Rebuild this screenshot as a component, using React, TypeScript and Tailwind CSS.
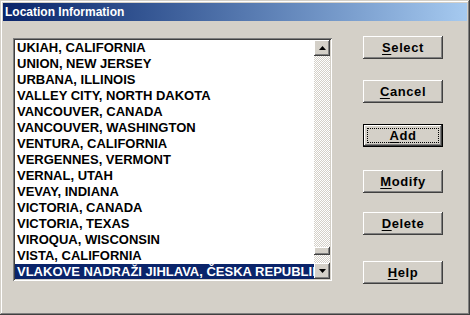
const places = [
  "UKIAH, CALIFORNIA",
  "UNION, NEW JERSEY",
  "URBANA, ILLINOIS",
  "VALLEY CITY, NORTH DAKOTA",
  "VANCOUVER, CANADA",
  "VANCOUVER, WASHINGTON",
  "VENTURA, CALIFORNIA",
  "VERGENNES, VERMONT",
  "VERNAL, UTAH",
  "VEVAY, INDIANA",
  "VICTORIA, CANADA",
  "VICTORIA, TEXAS",
  "VIROQUA, WISCONSIN",
  "VISTA, CALIFORNIA",
  "VLAKOVE NADRAŽI JIHLAVA, ČESKA REPUBLIKA",
]

const raised =
  "shadow-[inset_-1px_-1px_#404040,inset_1px_1px_#ffffff,inset_-2px_-2px_#808080,inset_2px_2px_#d4d0c8]"

function Arrow({ down }: { down?: boolean }) {
  return (
    <svg width="7" height="4" viewBox="0 0 7 4">
      {down ? <path d="M0 0h7L3.5 4z" fill="#000" /> : <path d="M0 4h7L3.5 0z" fill="#000" />}
    </svg>
  )
}

function Button({ label, hot, rest, isDefault, className }: { label: string; hot: string; rest: string; isDefault?: boolean; className?: string }) {
  return (
    <div
      className={`relative flex h-[23px] w-[80px] items-center justify-center bg-[#d4d0c8] text-[13px] font-bold tracking-[0.6px] text-black ${
        isDefault
          ? "border border-black shadow-[inset_-1px_-1px_#404040,inset_1px_1px_#ffffff,inset_-2px_-2px_#808080]"
          : raised
      } ${className ?? ""}`}
    >
      {isDefault && <div className="absolute inset-[3px] border border-dotted border-black" />}
      <span>
        <span className="underline underline-offset-2">{hot}</span>
        {rest}
      </span>
    </div>
  )
}

export default function App() {
  return (
    <div className="h-[315px] w-[470px] overflow-hidden bg-[#d4d0c8] font-['Liberation_Sans',Arial,sans-serif]">
      <div className="flex h-full w-full flex-col p-[3px] shadow-[inset_-1px_-1px_#404040,inset_1px_1px_#d4d0c8,inset_-2px_-2px_#808080,inset_2px_2px_#ffffff]">
        <div className="flex h-[18px] items-center bg-gradient-to-r from-[#0a246a] to-[#a6caf0] pl-[2px] text-[12px] font-bold text-white">
          Location Information
        </div>
        <div className="flex">
          <div className="ml-[10px] mt-[17px] flex h-[243px] w-[319px] p-[2px] shadow-[inset_1px_1px_#808080,inset_-1px_-1px_#ffffff,inset_2px_2px_#404040,inset_-2px_-2px_#d4d0c8]">
            <div className="flex-1 overflow-hidden bg-white">
              {places.map((p, i) => {
                const sel = i === places.length - 1
                return (
                  <div
                    key={p}
                    className={`h-[16px] overflow-hidden whitespace-nowrap pl-[2px] text-[13px] font-bold leading-[16px] ${
                      sel ? "bg-[#0a246a] text-white" : "text-black"
                    }`}
                  >
                    {p}
                  </div>
                )
              })}
            </div>
            <div className="flex w-[16px] flex-col bg-[repeating-conic-gradient(#d4d0c8_0%_25%,#ffffff_0%_50%)] bg-[length:2px_2px]">
              <div className={`flex h-[16px] items-center justify-center bg-[#d4d0c8] ${raised}`}>
                <Arrow />
              </div>
              <div className="flex-1" />
              <div className={`h-[8px] bg-[#d4d0c8] ${raised}`} />
              <div className="h-[8px]" />
              <div className={`flex h-[16px] items-center justify-center bg-[#d4d0c8] ${raised}`}>
                <Arrow down />
              </div>
            </div>
          </div>
          <div className="ml-[31px] mt-[15px] flex flex-col">
            <Button label="Select" hot="S" rest="elect" />
            <Button label="Cancel" hot="C" rest="ancel" className="mt-[21px]" />
            <Button label="Add" hot="A" rest="dd" isDefault className="mt-[21px]" />
            <Button label="Modify" hot="M" rest="odify" className="mt-[23px]" />
            <Button label="Delete" hot="D" rest="elete" className="mt-[19px]" />
            <Button label="Help" hot="H" rest="elp" className="mt-[26px]" />
          </div>
        </div>
      </div>
    </div>
  )
}
